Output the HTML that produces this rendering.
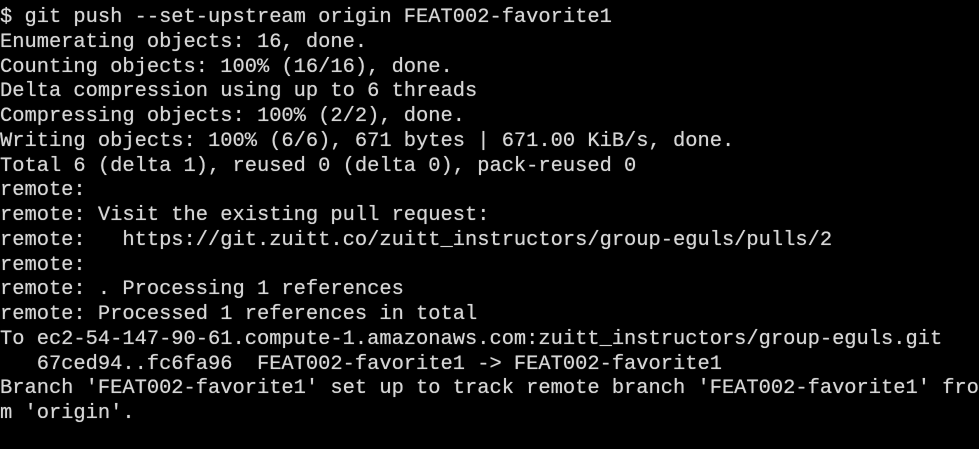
<!DOCTYPE html>
<html><head><style>
html,body{margin:0;padding:0;background:#000;width:979px;height:449px;overflow:hidden}
pre{margin:0;padding:6px 0 0 0;font-family:"Liberation Mono",monospace;font-size:20.4px;line-height:24.75px;color:#d6d6d6;white-space:pre;text-shadow:0 0 0.6px #d6d6d6}
</style></head><body><pre>$ git push --set-upstream origin FEAT002-favorite1
Enumerating objects: 16, done.
Counting objects: 100% (16/16), done.
Delta compression using up to 6 threads
Compressing objects: 100% (2/2), done.
Writing objects: 100% (6/6), 671 bytes | 671.00 KiB/s, done.
Total 6 (delta 1), reused 0 (delta 0), pack-reused 0
remote:
remote: Visit the existing pull request:
remote:   https://git.zuitt.co/zuitt_instructors/group-eguls/pulls/2
remote:
remote: . Processing 1 references
remote: Processed 1 references in total
To ec2-54-147-90-61.compute-1.amazonaws.com:zuitt_instructors/group-eguls.git
   67ced94..fc6fa96  FEAT002-favorite1 -&gt; FEAT002-favorite1
Branch 'FEAT002-favorite1' set up to track remote branch 'FEAT002-favorite1' fro
m 'origin'.
</pre></body></html>
